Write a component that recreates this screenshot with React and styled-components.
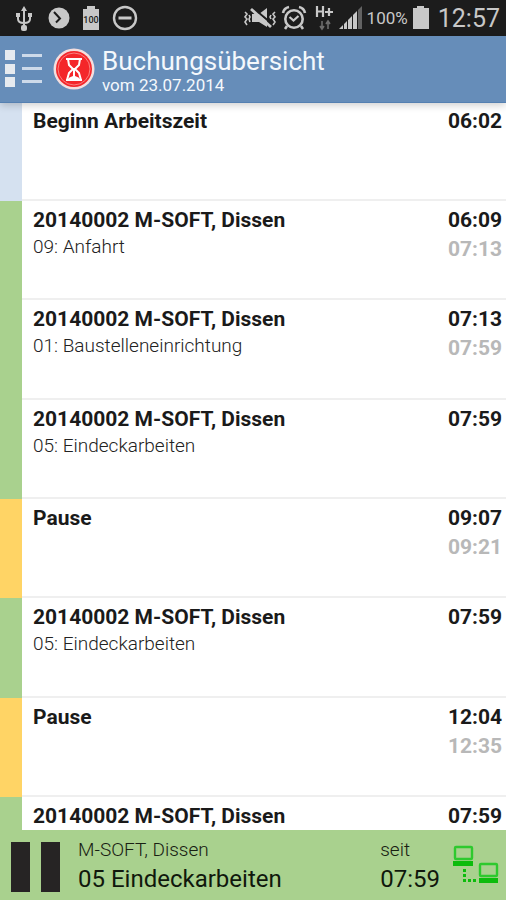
import React from 'react'

import styled, { createGlobalStyle } from 'styled-components'

const GlobalStyle = createGlobalStyle`
  * {
    box-sizing: border-box;
  }

  body {
    margin: 0;
    background-color: #fff;
    font-family: Roboto, 'Liberation Sans', sans-serif;
  }
`

const barColors = {
  start: '#d5e1f0',
  work: '#a9d18e',
  pause: '#ffd465',
}

const Screen = styled.div`
  display: flex;
  flex-direction: column;
  height: 100vh;
`

const StatusBar = styled.div`
  display: flex;
  align-items: center;
  justify-content: space-between;
  flex-shrink: 0;
  height: 36px;
  padding: 0px 6px 0px 12px;
  background-color: #1c1c1c;
  color: #c8c8c8;
`

const StatusGroup = styled.div`
  display: flex;
  align-items: center;
  gap: ${(props) => props.$gap}px;
`

const BatteryText = styled.span`
  font-size: 17px;
`

const Clock = styled.span`
  margin-left: 4px;
  font-size: 25px;
`

const Header = styled.header`
  position: relative;
  display: flex;
  align-items: center;
  flex-shrink: 0;
  height: 67px;
  padding: 0px 5px;
  background-color: #668db9;
  border-bottom: 1px solid #5580b1;
  color: #f4f8fc;
  box-shadow: 0 2px 8px 0 rgba(0, 0, 0, 0.2);
`

const MenuButton = styled.button`
  display: flex;
  padding: 0px;
  border: none;
  background: none;
  cursor: pointer;
`

const Logo = styled.svg`
  margin: 0px 7px 0px 11px;
`

const HeaderText = styled.div`
  display: flex;
  flex-direction: column;
  padding-top: 4px;
`

const Title = styled.h1`
  margin: 0px;
  font-size: 26px;
  font-weight: 400;
  line-height: 28px;
`

const Subtitle = styled.span`
  font-size: 17px;
  line-height: 20px;
`

const List = styled.ul`
  flex: 1;
  min-height: 0px;
  margin: 0px;
  padding: 0px;
  overflow: hidden;
  list-style: none;
`

const Row = styled.li`
  display: flex;
  justify-content: space-between;
  height: 99px;
  padding: 6px 4px 0px 11px;
  border-left: 22px solid ${(props) => barColors[props.$kind]};
  background: linear-gradient(#efefef, #efefef) bottom / 100% 2px no-repeat;

  &:first-child {
    height: 98px;
    padding-top: 5px;
  }

  &:nth-child(3n) {
    height: 100px;
  }
`

const Info = styled.div`
  display: flex;
  flex-direction: column;
`

const Name = styled.span`
  color: #1a1a1a;
  font-size: 21px;
  font-weight: 700;
  line-height: 26px;
`

const Task = styled.span`
  color: #222;
  font-size: 19px;
  font-weight: 300;
  line-height: 28px;
`

const Times = styled.div`
  display: flex;
  flex-direction: column;
  text-align: right;
  font-size: 21px;
  font-weight: 700;
`

const StartTime = styled.span`
  color: #1a1a1a;
  line-height: 26px;
`

const EndTime = styled.span`
  color: #b8b8b8;
  line-height: 32px;
`

const Footer = styled.footer`
  display: flex;
  align-items: center;
  flex-shrink: 0;
  height: 70px;
  padding: 0px 7px 0px 11px;
  background-color: #a9d18e;
`

const PauseButton = styled.button`
  display: flex;
  gap: 11px;
  padding: 4px 0px 0px;
  border: none;
  background: none;
  cursor: pointer;
`

const PauseBar = styled.span`
  width: 19px;
  height: 50px;
  background-color: #262424;
`

const Current = styled.div`
  display: flex;
  flex-direction: column;
  flex: 1;
  margin-left: 18px;
  padding-top: 2px;
`

const Since = styled.div`
  display: flex;
  flex-direction: column;
  margin-right: 13px;
  padding-top: 2px;
`

const FooterLabel = styled.span`
  color: #182012;
  font-size: 19px;
  font-weight: 300;
  line-height: 26px;
`

const FooterValue = styled.span`
  color: #10180c;
  font-size: 24px;
  line-height: 32px;
`

const bookings = [
  { kind: 'start', name: 'Beginn Arbeitszeit', from: '06:02' },
  {
    kind: 'work',
    name: '20140002 M-SOFT, Dissen',
    task: '09: Anfahrt',
    from: '06:09',
    to: '07:13',
  },
  {
    kind: 'work',
    name: '20140002 M-SOFT, Dissen',
    task: '01: Baustelleneinrichtung',
    from: '07:13',
    to: '07:59',
  },
  {
    kind: 'work',
    name: '20140002 M-SOFT, Dissen',
    task: '05: Eindeckarbeiten',
    from: '07:59',
  },
  { kind: 'pause', name: 'Pause', from: '09:07', to: '09:21' },
  {
    kind: 'work',
    name: '20140002 M-SOFT, Dissen',
    task: '05: Eindeckarbeiten',
    from: '07:59',
  },
  { kind: 'pause', name: 'Pause', from: '12:04', to: '12:35' },
  { kind: 'work', name: '20140002 M-SOFT, Dissen', from: '07:59' },
]

const UsbIcon = () => (
  <svg width="24" height="28" viewBox="0 0 24 28" fill="none" stroke="#c8c8c8">
    <path d="M12 5v18M6 11v4q0 4 6 4 6 0 6-4v-4" strokeWidth="2" />
    <path d="M12 2l3 5H9z" fill="#c8c8c8" stroke="none" />
    <rect x="9" y="21" width="6" height="6" rx="2" fill="#c8c8c8" stroke="none" />
    <path d="M4 9h4v4H4zM16 9h4v4h-4z" fill="#c8c8c8" stroke="none" />
  </svg>
)

const ArrowIcon = () => (
  <svg width="22" height="22" viewBox="0 0 22 22">
    <circle cx="11" cy="11" r="10.5" fill="#c8c8c8" />
    <path
      d="M6 5l6 6.500-4 4"
      fill="none"
      stroke="#1c1c1c"
      strokeWidth="2"
    />
  </svg>
)

const FullBatteryIcon = () => (
  <svg width="18" height="26" viewBox="0 0 18 26">
    <path d="M5 1h8v3h4v21H1V4h4z" fill="#c8c8c8" />
    <text
      x="9"
      y="18"
      textAnchor="middle"
      fontSize="9"
      fontWeight="500"
      fill="#1c1c1c"
    >
      100
    </text>
  </svg>
)

const BlockIcon = () => (
  <svg width="26" height="26" viewBox="0 0 26 26" fill="none" stroke="#c8c8c8">
    <circle cx="13" cy="13" r="11" strokeWidth="2.400" />
    <path d="M6.500 13h13" strokeWidth="3" />
  </svg>
)

const MuteIcon = () => (
  <svg width="34" height="24" viewBox="0 0 34 24" fill="none" stroke="#c8c8c8">
    <path d="M9 8h7l8-6v19l-8-5H9z" fill="#c8c8c8" stroke="none" />
    <path d="M10 2l18 15" stroke="#1c1c1c" strokeWidth="2" />
    <path d="M8 3l20 18" strokeWidth="2.800" />
    <path
      d="M2 6l2 2-2 3 2 2-2 3 2 3M6 9l1 2-1 2 1 3M32 6l-2 2 2 3-2 2 2 3-2 3M28 9l-1 2 1 2"
      strokeWidth="1.600"
    />
  </svg>
)

const AlarmIcon = () => (
  <svg width="26" height="26" viewBox="0 0 26 26" fill="none" stroke="#c8c8c8">
    <circle cx="13" cy="14" r="8.700" strokeWidth="2.600" />
    <path
      d="M2 8q1-5 6-6M24 8q-1-5-6-6M6 21l-2 3M20 21l2 3"
      strokeWidth="2.600"
    />
    <path d="M8.500 12l4 3.500 5-4.500" strokeWidth="2.200" />
  </svg>
)

const DataIcon = () => (
  <svg width="24" height="28" viewBox="-4 0 24 28">
    <path
      d="M2 2v11M8 2v11M2 7.500h6M10 8h8M14 4v8"
      fill="none"
      stroke="#c8c8c8"
      strokeWidth="2.200"
    />
    <path
      d="M7 17v8M5 22l2 3 2-3M13 25v-8M11 20l2-3 2 3"
      fill="none"
      stroke="#6c6c6c"
      strokeWidth="1.600"
    />
  </svg>
)

const SignalIcon = () => (
  <svg width="24" height="24" viewBox="0 0 24 24" fill="#c8c8c8">
    <path d="M0 23l4-4v4zM5 18l3-3v8H5zM9 14l4-4v13H9zM14 9l4-4v18h-4z" />
    <path d="M19 4l4-4v23h-4z" fill="#626262" />
  </svg>
)

const BatteryIcon = () => (
  <svg width="18" height="24" viewBox="0 0 18 24">
    <path d="M5 0h7v2h5v21H1V2h4z" fill="#c8c8c8" />
  </svg>
)

const MenuIcon = () => (
  <svg width="37" height="38" viewBox="0 0 37 38" fill="#e6eaef">
    <path d="M0 0h10v10H0zM0 14h10v10H0zM0 27h10v10H0z" />
    <path d="M17 4h20v3H17zM17 17h20v3H17zM17 30h20v3H17z" fill="#cddaea" />
  </svg>
)

const HourglassLogo = () => (
  <Logo width="42" height="42" viewBox="0 0 42 42">
    <circle cx="21" cy="21" r="20.500" fill="#f4dede" />
    <circle cx="21" cy="21" r="18" fill="#f4262a" />
    <circle
      cx="21"
      cy="21"
      r="16"
      fill="none"
      stroke="#fa8080"
      strokeWidth="1"
    />
    <path
      d="M13 11h16M13 32h16M15 11l1 6 4 4-4 4-2 7M27 11l-1 6-4 4 4 4 2 7"
      fill="none"
      stroke="#fff"
      strokeWidth="2"
    />
    <path d="M14 32q2-3 6-4v-8h2v8q4 1 6 4z" fill="#fff" />
  </Logo>
)

const ConnectionIcon = () => (
  <svg width="46" height="40" viewBox="0 0 46 40" fill="none" stroke="#2ec92e">
    <rect x="2" y="2" width="17" height="12" rx="1" strokeWidth="2.400" />
    <rect x="27" y="19" width="17" height="12" rx="1" strokeWidth="2.400" />
    <path d="M0 16h20v5H0zM26 33h19v5H26z" fill="#0cbc0c" stroke="none" />
    <path d="M10 24h3v3h-3zM10 29h3v3h-3zM10 34h3v3h-3zM15 34h3v3h-3zM20 34h3v3h-3z" fill="#0cbc0c" stroke="none" />
  </svg>
)

const App = () => {
  return (
    <Screen>
      <GlobalStyle />
      <StatusBar>
        <StatusGroup $gap={12}>
          <UsbIcon />
          <ArrowIcon />
          <FullBatteryIcon />
          <BlockIcon />
        </StatusGroup>
        <StatusGroup $gap={4}>
          <MuteIcon />
          <AlarmIcon />
          <DataIcon />
          <SignalIcon />
          <BatteryText>100%</BatteryText>
          <BatteryIcon />
          <Clock>12:57</Clock>
        </StatusGroup>
      </StatusBar>
      <Header>
        <MenuButton aria-label="Menü">
          <MenuIcon />
        </MenuButton>
        <HourglassLogo />
        <HeaderText>
          <Title>Buchungsübersicht</Title>
          <Subtitle>vom 23.07.2014</Subtitle>
        </HeaderText>
      </Header>
      <List>
        {bookings.map((booking, index) => (
          <Row key={index} $kind={booking.kind}>
            <Info>
              <Name>{booking.name}</Name>
              {booking.task && <Task>{booking.task}</Task>}
            </Info>
            <Times>
              <StartTime>{booking.from}</StartTime>
              {booking.to && <EndTime>{booking.to}</EndTime>}
            </Times>
          </Row>
        ))}
      </List>
      <Footer>
        <PauseButton aria-label="Pause">
          <PauseBar />
          <PauseBar />
        </PauseButton>
        <Current>
          <FooterLabel>M-SOFT, Dissen</FooterLabel>
          <FooterValue>05 Eindeckarbeiten</FooterValue>
        </Current>
        <Since>
          <FooterLabel>seit</FooterLabel>
          <FooterValue>07:59</FooterValue>
        </Since>
        <ConnectionIcon />
      </Footer>
    </Screen>
  )
}

export default App
